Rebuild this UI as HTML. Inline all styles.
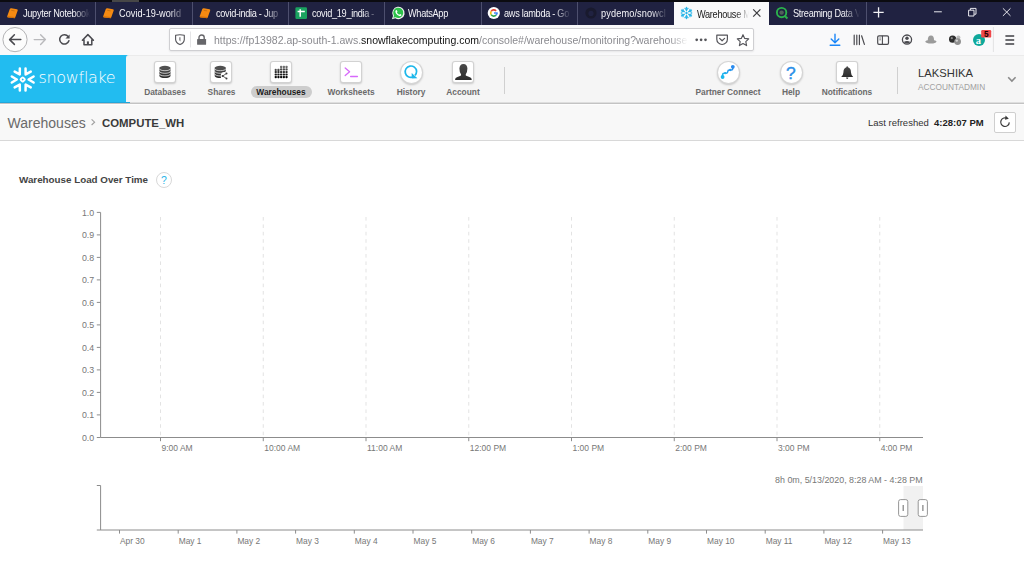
<!DOCTYPE html>
<html><head><meta charset="utf-8"><title>Warehouse Monitoring</title>
<style>
*{box-sizing:border-box;margin:0;padding:0}
html,body{width:1024px;height:576px;overflow:hidden;background:#fff;font-family:"Liberation Sans",sans-serif}
.a{position:absolute}
.t{position:absolute;white-space:nowrap;line-height:1}
/* firefox chrome */
#top{left:0;top:0;width:1024px;height:1.5px;background:#0b0b10}
#tabs{left:0;top:1px;width:1024px;height:24px;background:#202241}
.tab{position:absolute;top:0;height:24px;color:#f4f4f8;font-size:9.2px;letter-spacing:-.3px}
.tab .lbl{position:absolute;left:23px;top:7.1px;transform:scaleY(1.09);transform-origin:0 80%;white-space:nowrap;line-height:12px;width:67px;overflow:hidden;
  -webkit-mask-image:linear-gradient(90deg,#000 75%,transparent 100%);mask-image:linear-gradient(90deg,#000 75%,transparent 100%)}
.sep{position:absolute;top:0;width:1px;height:24px;background:#4d4f6e}
#tb{left:0;top:25px;width:1024px;height:30px;background:#f9f9fa}
#url{left:169px;top:28px;width:585px;height:23px;background:#fff;border:1px solid #cfcfd2;border-radius:2px;box-shadow:0 1px 2px rgba(0,0,0,.08)}
/* snowflake */
#hdr{left:126px;top:55px;width:898px;height:47px;background:#f5f5f5;border-top:1px solid #ebebeb;border-top-left-radius:3px}
#hdrb{left:0;top:102px;width:1024px;height:2px;background:linear-gradient(#dedede 0 50%,#c3c3c3 50% 100%)}
#logo{left:0;top:55px;width:130px;height:48px;background:linear-gradient(#22bcf0 0 47px,#22a6da 47px 48px)}
.ib{position:absolute;top:62px;width:20px;height:20px;margin-left:1px;background:#fff;border-radius:2px;box-shadow:0 0 0 1px #d2d2d2,0 1px 2px 1px rgba(0,0,0,.18)}
.ic{position:absolute;top:61.5px;width:21px;height:21px;margin-left:.5px;background:#fff;border-radius:11px;box-shadow:0 0 0 1px #d6d6d6,0 1px 2px 1px rgba(0,0,0,.18)}
.nl{position:absolute;top:88px;font-size:8.35px;font-weight:700;color:#6b6b6b;white-space:nowrap;line-height:9px;transform:translateX(-50%)}
#bc{left:0;top:104px;width:1024px;height:37px;background:#f8f8f8;border-top:1px solid #fdfdfd;border-bottom:1px solid #d8d8d8}
.ax{font-size:8.8px;fill:#777;font-family:"Liberation Sans",sans-serif}
</style></head><body>
<!-- ===== Firefox tab bar ===== -->
<div class="a" id="tabs">
  <div class="tab" style="left:0;width:95px"><span class="lbl">Jupyter Notebook</span></div>
  <div class="tab" style="left:96px;width:96px"><span class="lbl" style="letter-spacing:.02px">Covid-19-world</span></div>
  <div class="tab" style="left:193px;width:96px"><span class="lbl">covid-india - Jup</span></div>
  <div class="tab" style="left:289px;width:96px"><span class="lbl">covid_19_india -</span></div>
  <div class="tab" style="left:385px;width:96px"><span class="lbl">WhatsApp</span></div>
  <div class="tab" style="left:481px;width:96px"><span class="lbl">aws lambda - Go</span></div>
  <div class="tab" style="left:578px;width:96px"><span class="lbl" style="letter-spacing:.12px">pydemo/snowcl</span></div>
  <div class="tab" style="left:674px;width:95px;top:.5px;background:#f9f9fa;color:#1a1a1a"><span class="lbl" style="width:52px">Warehouse M</span></div>
  <div class="tab" style="left:770px;width:96px"><span class="lbl">Streaming Data V</span></div>
  <div class="sep" style="left:95px"></div><div class="sep" style="left:192px"></div><div class="sep" style="left:288px"></div>
  <div class="sep" style="left:384px"></div><div class="sep" style="left:481px"></div><div class="sep" style="left:577px"></div>
  <div class="sep" style="left:866px"></div>
</div>
<div class="a" id="top"></div><div class="a" style="left:112px;top:0;width:27px;height:1.5px;background:#474747"></div>
<!-- ===== Firefox toolbar ===== -->
<div class="a" id="tb"></div>
<div class="a" id="url"></div>
<div class="t" id="urltxt" style="left:214px;top:32.8px;font-size:10.5px;line-height:14px;color:#8a8a8f;width:474px;overflow:hidden;-webkit-mask-image:linear-gradient(90deg,#000 96%,transparent 100%);mask-image:linear-gradient(90deg,#000 96%,transparent 100%)">https://fp13982.ap-south-1.aws.<span style="color:#111">snowflakecomputing.com</span>/console#/warehouse/monitoring?warehouse</div>
<svg class="a" id="ffx" style="left:0;top:0" width="1024" height="56" viewBox="0 0 1024 56">
<defs>
<g id="book"><path d="M.2 8.3 2.8 1.1Q3.2 0 4.4 .2L10 1.2Q11 1.5 10.7 2.5L8.3 9.3Q7.9 10.3 6.8 10.1L1 9.5Q0 9.3 .2 8.3Z" fill="#f58a12"/><path d="M.6 8.7 7.6 9.6" stroke="#d2700a" stroke-width="1.1"/><path d="M4.2 2.3 7.6 2.9" stroke="#c9700f" stroke-width=".9"/></g>
</defs>
<use href="#book" x="7" y="8"/><use href="#book" x="103" y="8"/><use href="#book" x="199.5" y="8"/>
<!-- sheets -->
<rect x="295.4" y="7.2" width="11.6" height="11.7" rx="1.2" fill="#1aa260"/><path d="M297.6 11.4H304.8M300.2 9.2V16.8" stroke="#fff" stroke-width="1.5"/>
<!-- whatsapp -->
<path d="M391.9 19.2 393 15.9A6.2 6.2 0 1 1 395.3 18.3Z" fill="#f4f4f4"/>
<path d="M393.3 17.8 394 15.7A5.1 5.1 0 1 1 395.6 17.2Z" fill="#2dc24a"/>
<path d="M395.7 10.5Q396.6 9.6 397 10.6L397.5 11.7 396.9 12.5Q397.8 14.2 399.4 14.8L400.1 14 401.4 14.7Q401.7 15.6 400.5 16.1 399.2 16.4 397.4 15.1 395.6 13.5 395.4 12 395.3 11.1 395.7 10.5Z" fill="#fff"/>
<!-- google -->
<circle cx="493.8" cy="13" r="6.1" fill="#fff"/>
<path d="M491.17 11.36A3.1 3.1 0 0 1 496.10 10.93" fill="none" stroke="#ea4335" stroke-width="1.6"/>
<path d="M491.12 14.55A3.1 3.1 0 0 1 491.17 11.36" fill="none" stroke="#fbbc05" stroke-width="1.6"/>
<path d="M496.17 14.99A3.1 3.1 0 0 1 491.12 14.55" fill="none" stroke="#34a853" stroke-width="1.6"/>
<path d="M496.90 13.00A3.1 3.1 0 0 1 496.17 14.99" fill="none" stroke="#4285f4" stroke-width="1.6"/>
<path d="M494.0 13.0H497.70000000000005" stroke="#4285f4" stroke-width="1.5"/>
<!-- github (dark on dark) -->
<circle cx="591" cy="13" r="5.6" fill="#191a2e"/><circle cx="591" cy="13.4" r="2.6" fill="#202241"/>
<!-- snowflake favicon -->
<g stroke="#29b5e8" stroke-width="1.5" stroke-linecap="round" fill="none">
<path d="M686.5 7.4V10.4M686.5 15.6V18.6M681.6 10.2 684.2 11.7M688.8 14.3 691.4 15.8M681.6 15.8 684.2 14.3M688.8 11.7 691.4 10.2"/>
<path d="M684.9 8.3 686.5 9.7 688.1 8.3M684.9 17.7 686.5 16.3 688.1 17.7M681.3 12.2 683.3 11.3 683 9.2M691.7 13.8 689.7 14.7 690 16.8M681.3 13.8 683.3 14.7 683 16.8M691.7 12.2 689.7 11.3 690 9.2" stroke-width="1.1"/>
</g><rect x="685.4" y="11.9" width="2.2" height="2.2" fill="#29b5e8" transform="rotate(45 686.5 13)"/>
<!-- tab close -->
<path d="M753.2 9.4 760.4 16.6M760.4 9.4 753.2 16.6" stroke="#3a3a3e" stroke-width="1.2"/>
<!-- qlik -->
<circle cx="781.6" cy="12.6" r="4.7" fill="none" stroke="#2bb24c" stroke-width="1.9"/><circle cx="781.6" cy="12.6" r="2.2" fill="#51605a"/><path d="M784.6 15.8 787.4 18.4" stroke="#2bb24c" stroke-width="2"/>
<!-- plus / window controls -->
<path d="M873.4 12.4H883.7M878.55 7.2V17.6" stroke="#f2f2f5" stroke-width="1.3"/>
<path d="M934 11.8H941.8" stroke="#e8e8ee" stroke-width="1"/>
<path d="M968.6 10.2H974V16H968.6ZM970.4 10V8.4H976V14.2H974.2" fill="none" stroke="#e8e8ee" stroke-width="1"/>
<path d="M1002.9 8.3 1010.5 15.9M1010.5 8.3 1002.9 15.9" stroke="#e8e8ee" stroke-width="1"/>
<!-- nav buttons -->
<circle cx="15" cy="39.6" r="12.1" fill="#fcfcfc" stroke="#b4b4b6" stroke-width="1"/>
<path d="M20.8 39.6H9.6M14.4 34.8 9.6 39.6 14.4 44.4" fill="none" stroke="#4a4a4f" stroke-width="1.5" stroke-linecap="round" stroke-linejoin="round"/>
<path d="M34.2 39.6H45.4M40.6 34.8 45.4 39.6 40.6 44.4" fill="none" stroke="#b9b9bc" stroke-width="1.4" stroke-linecap="round" stroke-linejoin="round"/>
<path d="M68.2 36.6A4.7 4.7 0 1 0 68.9 40.8" fill="none" stroke="#4a4a4f" stroke-width="1.5" stroke-linecap="round"/><path d="M69.6 34.4V38.6H65.4Z" fill="#4a4a4f"/>
<path d="M82.4 40.2 87.9 34.6 93.4 40.2M84 39.4V44.8H91.8V39.4" fill="none" stroke="#4a4a4f" stroke-width="1.5" stroke-linejoin="round" stroke-linecap="round"/><rect x="86.9" y="41.4" width="2" height="3.4" fill="#4a4a4f"/>
<!-- url bar icons -->
<path d="M175.6 35.3Q180 34.2 184.3 35.3V39.6Q184 43 180 44.6 176 43 175.6 39.6Z" fill="none" stroke="#55555a" stroke-width="1.1" stroke-linejoin="round"/><path d="M179.4 37.2H180.4V41.4Q179.5 40.8 179.4 39.8Z" fill="#55555a"/>
<path d="M190.5 31.5V47.4" stroke="#e4e4e6" stroke-width="1"/>
<rect x="197.1" y="39" width="9" height="5.8" rx=".6" fill="#66666a"/><path d="M199 39.4V37.6A2.6 2.6 0 0 1 204.2 37.6V39.4" fill="none" stroke="#66666a" stroke-width="1.4"/>
<circle cx="696.7" cy="39.8" r="1.35" fill="#55555a"/><circle cx="701.1" cy="39.8" r="1.35" fill="#55555a"/><circle cx="705.5" cy="39.8" r="1.35" fill="#55555a"/>
<path d="M716.8 35.2H727.4V39.2A5.3 5.3 0 0 1 716.8 39.2Z" fill="none" stroke="#55555a" stroke-width="1.2" stroke-linejoin="round"/><path d="M719.6 38.4 722.1 40.8 724.6 38.4" fill="none" stroke="#55555a" stroke-width="1.2" stroke-linecap="round" stroke-linejoin="round"/>
<path d="M743 34.7 744.7 38.4 748.7 38.9 745.8 41.6 746.6 45.6 743 43.6 739.4 45.6 740.2 41.6 737.3 38.9 741.3 38.4Z" fill="none" stroke="#55555a" stroke-width="1.15" stroke-linejoin="round"/>
<!-- toolbar right icons -->
<path d="M835 34.2V42.6M831.2 39 835 42.8 838.8 39M830.2 45.2H839.8" fill="none" stroke="#1a86f7" stroke-width="1.4" stroke-linecap="round" stroke-linejoin="round"/>
<path d="M854.2 35.2V44.6M856.8 35.2V44.6M859.4 35.2V44.6M861.6 35.8 864.4 44.4" fill="none" stroke="#4a4a4f" stroke-width="1.2" stroke-linecap="round"/>
<rect x="877.7" y="35.8" width="10.8" height="8.6" rx="1.3" fill="none" stroke="#4a4a4f" stroke-width="1.2"/><path d="M882.4 35.8V44.4" stroke="#4a4a4f" stroke-width="1.1"/><path d="M879.4 38H880.8M879.4 39.8H880.8" stroke="#4a4a4f" stroke-width=".8"/>
<circle cx="907" cy="39.6" r="4.6" fill="none" stroke="#4a4a4f" stroke-width="1.3"/><circle cx="907" cy="38.2" r="1.7" fill="#4a4a4f"/><path d="M903.6 42Q907 39.8 910.4 42 907 45.2 903.6 42Z" fill="#4a4a4f"/>
<path d="M925.2 41.4Q926.4 40.2 927.8 40.2 927.6 35.6 931 35.5 934.2 35.6 934 40.2 935.4 40.2 936.6 41.4 935.6 43.4 931 43.6 926.2 43.4 925.2 41.4Z" fill="#9b9b9b"/>
<circle cx="952.6" cy="39.2" r="3.6" fill="#2e2e2e"/><circle cx="951.8" cy="38.2" r="1.1" fill="#8a8a8a"/><circle cx="958.4" cy="37.6" r="2" fill="#bdbdbd"/><circle cx="957.6" cy="41.6" r="3.4" fill="#8f8f8f"/><circle cx="956.8" cy="40.6" r="1.2" fill="#d6d6d6"/>
<circle cx="979" cy="40" r="6" fill="#0fa89b"/>
<rect x="981.2" y="30" width="10" height="7.6" rx="1.2" fill="#f0484b"/>
<path d="M993.4 27V52" stroke="#e2e2e4" stroke-width="1"/>
<path d="M1005.4 36H1014.2M1005.4 40H1014.2M1005.4 44H1014.2" stroke="#3f3f44" stroke-width="1.3"/>
<text x="975.7" y="43.6" font-family="Liberation Serif,serif" font-weight="700" font-size="10.5" fill="#fff">a</text>
<text x="983.9" y="36.8" font-family="Liberation Sans,sans-serif" font-weight="700" font-size="8.2" fill="#200">5</text>
</svg>
<!-- ===== Snowflake header ===== -->
<div class="a" id="hdrb"></div>
<div class="a" id="logo"></div>
<div class="a" id="hdr"></div>
<div class="t" style="left:38.5px;top:70.2px;font-family:'DejaVu Sans Light','DejaVu Sans','Liberation Sans',sans-serif;font-weight:200;font-size:16px;color:#fff;letter-spacing:-.32px">snowflake</div>
<div class="ib" style="left:154px"></div><div class="nl" style="left:165px">Databases</div>
<div class="ib" style="left:210px"></div><div class="nl" style="left:221.5px">Shares</div>
<div class="a" style="left:251px;top:86px;width:61px;height:12px;border-radius:6px;background:#cdcdcd"></div>
<div class="ib" style="left:270px"></div><div class="nl" style="left:281px;color:#1d1d1d">Warehouses</div>
<div class="ib" style="left:340px"></div><div class="nl" style="left:351px">Worksheets</div>
<div class="ic" style="left:400px"></div><div class="nl" style="left:411px">History</div>
<div class="ib" style="left:452px"></div><div class="nl" style="left:463px">Account</div>
<div class="a" style="left:504px;top:67px;width:1px;height:27px;background:#d0d0d0"></div>
<div class="ic" style="left:717px"></div><div class="nl" style="left:728px">Partner Connect</div>
<div class="ic" style="left:780px"></div><div class="nl" style="left:791px">Help</div>
<div class="ib" style="left:836px"></div><div class="nl" style="left:847px">Notifications</div>
<div class="a" style="left:897px;top:67px;width:1px;height:27px;background:#d0d0d0"></div>
<div class="t" style="left:918px;top:68px;font-size:11.2px;color:#333;letter-spacing:.05px">LAKSHIKA</div>
<div class="t" style="left:918px;top:83px;font-size:8.3px;color:#a0a0a0">ACCOUNTADMIN</div>
<!-- ===== Breadcrumb bar ===== -->
<div class="a" id="bc"></div>
<div class="t" style="left:7.6px;top:116.2px;font-size:14px;color:#6a6a6a">Warehouses</div>
<div class="t" style="left:102px;top:118.2px;font-size:11.4px;font-weight:700;color:#3a3a3a">COMPUTE_WH</div>
<div class="t" style="left:868px;top:118px;font-size:9.5px;color:#333">Last refreshed</div>
<div class="t" style="left:934px;top:118px;font-size:9.5px;font-weight:700;color:#222">4:28:07 PM</div>
<div class="a" style="left:994px;top:112px;width:22px;height:21px;background:#fff;border:1px solid #cfcfcf;border-radius:2px"></div>
<svg class="a" id="sfx" style="left:0;top:55px" width="1024" height="90" viewBox="0 55 1024 90">
<defs>
<linearGradient id="gd" x1="0" y1="0" x2="0" y2="1"><stop offset="0" stop-color="#4a4a4a"/><stop offset="1" stop-color="#2c2c2c"/></linearGradient>
<linearGradient id="gw" gradientUnits="userSpaceOnUse" x1="0" y1="65.8" x2="0" y2="78.3"><stop offset="0" stop-color="#7a7a7a"/><stop offset=".5" stop-color="#2a2a2a"/><stop offset="1" stop-color="#000"/></linearGradient>
<linearGradient id="gp" x1="0" y1="1" x2="1" y2="0"><stop offset="0" stop-color="#1cb8ec"/><stop offset="1" stop-color="#2a86ee"/></linearGradient>
<g id="db"><path d="M0 2V10.2A5.55 2 0 0 0 11.1 10.2V2Z" fill="url(#gd)"/><ellipse cx="5.55" cy="2" rx="5.55" ry="2" fill="#505050"/>
<path d="M0 2.9A5.55 2 0 0 0 11.1 2.9M0 5.5A5.55 2 0 0 0 11.1 5.5M0 8.1A5.55 2 0 0 0 11.1 8.1" fill="none" stroke="#f2f2f2" stroke-width=".75"/></g>
</defs>
<g fill="none" stroke="#fff" stroke-width="2.5" stroke-linecap="round" stroke-linejoin="round"><path transform="rotate(0 22.7 79.5)" d="M33.6 76.5 28.6 79.5 33.6 82.5"/><path transform="rotate(60 22.7 79.5)" d="M33.6 76.5 28.6 79.5 33.6 82.5"/><path transform="rotate(120 22.7 79.5)" d="M33.6 76.5 28.6 79.5 33.6 82.5"/><path transform="rotate(180 22.7 79.5)" d="M33.6 76.5 28.6 79.5 33.6 82.5"/><path transform="rotate(240 22.7 79.5)" d="M33.6 76.5 28.6 79.5 33.6 82.5"/><path transform="rotate(300 22.7 79.5)" d="M33.6 76.5 28.6 79.5 33.6 82.5"/></g>
<rect x="21.0" y="77.8" width="3.4" height="3.4" rx=".7" fill="none" stroke="#fff" stroke-width="1.8" transform="rotate(45 22.7 79.5)"/>
<use href="#db" x="159.4" y="65.8"/>
<use href="#db" x="214.7" y="65.8"/>
<circle cx="224.6" cy="76" r="3.9" fill="#fff"/>
<path d="M226.4 73.6 222.6 76 226.4 78.4" fill="none" stroke="#3c3c3c" stroke-width=".8"/><circle cx="226.5" cy="73.6" r="1" fill="#3c3c3c"/><circle cx="222.6" cy="76" r="1" fill="#3c3c3c"/><circle cx="226.5" cy="78.4" r="1" fill="#3c3c3c"/>
<g fill="url(#gw)"><rect x="274.60" y="76.00" width="2.3" height="2.15" rx=".8"/><rect x="274.60" y="73.45" width="2.3" height="2.15" rx=".8"/><rect x="274.60" y="70.90" width="2.3" height="2.15" rx=".8"/><circle cx="275.70" cy="69.95" r="1.1"/><rect x="277.30" y="76.00" width="2.3" height="2.15" rx=".8"/><rect x="277.30" y="73.45" width="2.3" height="2.15" rx=".8"/><rect x="277.30" y="70.90" width="2.3" height="2.15" rx=".8"/><rect x="277.30" y="68.85" width="2.3" height="2.15" rx=".8"/><rect x="280.00" y="76.00" width="2.3" height="2.15" rx=".8"/><rect x="280.00" y="73.45" width="2.3" height="2.15" rx=".8"/><rect x="280.00" y="70.90" width="2.3" height="2.15" rx=".8"/><rect x="280.00" y="68.35" width="2.3" height="2.15" rx=".8"/><rect x="280.00" y="65.80" width="2.3" height="2.15" rx=".8"/><rect x="282.70" y="76.00" width="2.3" height="2.15" rx=".8"/><rect x="282.70" y="73.45" width="2.3" height="2.15" rx=".8"/><rect x="282.70" y="70.90" width="2.3" height="2.15" rx=".8"/><rect x="282.70" y="68.35" width="2.3" height="2.15" rx=".8"/><rect x="282.70" y="65.80" width="2.3" height="2.15" rx=".8"/><rect x="285.40" y="76.00" width="2.3" height="2.15" rx=".8"/><rect x="285.40" y="73.45" width="2.3" height="2.15" rx=".8"/><rect x="285.40" y="70.90" width="2.3" height="2.15" rx=".8"/><rect x="285.40" y="68.35" width="2.3" height="2.15" rx=".8"/><rect x="285.40" y="65.80" width="2.3" height="2.15" rx=".8"/></g>
<path d="M345.2 68 349.6 71.8 345.2 75.6" fill="none" stroke="#d769fb" stroke-width="1.3" stroke-linecap="round" stroke-linejoin="round"/><path d="M350.6 76.5H357.4" stroke="#d769fb" stroke-width="1.3" stroke-linecap="round"/>
<path d="M412.85 77.06A5.7 5.7 0 1 1 416.58 71.2Q416.6 73.6 415 75.4" fill="none" stroke="#1db7ea" stroke-width="1.7"/><path d="M411.7 72.9 417.4 78.3 411.7 78.5Z" fill="#1db7ea"/>
<path d="M455 79.9Q455 77.6 457.4 76.9L460.6 75.8Q461.4 75.2 461 74.2 459.4 72 459.4 68.6 459.6 64.2 463.4 64 467.3 64.2 467.4 68.6 467.4 72 465.8 74.2 465.4 75.2 466.2 75.8L469.4 76.9Q471.8 77.6 471.8 79.9Z" fill="url(#gd)"/>
<path d="M722.6 77.2V74.8Q722.6 73.2 724.2 73.2H726.2Q727.8 73.2 727.8 71.6 727.8 70 729.4 70H731.2Q732.8 70 732.8 68.4V66.8" fill="none" stroke="url(#gp)" stroke-width="1.5"/><circle cx="722.6" cy="77" r="1.9" fill="#1cb8ec"/><circle cx="732.8" cy="66.8" r="1.9" fill="#2a8bee"/><circle cx="725.2" cy="73.2" r="1.15" fill="#1fb0ec"/><circle cx="730.2" cy="70" r="1.15" fill="#259cee"/>
<text x="790.9" y="78.6" text-anchor="middle" font-family="Liberation Sans,sans-serif" font-size="17.4" fill="#2b8fe8" stroke="#2b8fe8" stroke-width=".45">?</text>
<path d="M841.2 77Q843.2 75.6 843.4 72.4 843.4 68 846.4 67.2 846.4 66.2 847.2 66.2 848 66.2 848 67.2 851 68 851 72.4 851.2 75.6 853.2 77Z" fill="url(#gd)"/><path d="M846 77.6H848.4Q848.2 79 847.2 79 846.2 79 846 77.6Z" fill="#333"/>
<path d="M1008.2 77.2 1011.9 81 1015.6 77.2" fill="none" stroke="#8a8a8a" stroke-width="1.6"/>
<path d="M91.6 119.4 94.6 122.2 91.6 125" fill="none" stroke="#a0a0a0" stroke-width="1.1"/>
<path d="M1007.4 118.6A4.3 4.3 0 1 0 1009.3 122.4" fill="none" stroke="#3a3a3a" stroke-width="1.2"/><path d="M1005.6 115.6 1008.8 118.8 1005 119.8Z" fill="#3a3a3a"/>
</svg>
<!-- ===== Content ===== -->
<div class="t" style="left:19px;top:175px;font-size:9.8px;font-weight:700;color:#444">Warehouse Load Over Time</div>
<div class="a" style="left:156px;top:172px;width:16px;height:16px;border-radius:8px;border:1px solid #d8d8d8;background:#fff"></div>
<div class="t" style="left:161px;top:175px;font-size:10.5px;color:#29b5e8">?</div>
<svg class="a" id="chart" style="left:0;top:200px" width="1024" height="376" viewBox="0 200 1024 376">
<line x1="160.50" y1="217" x2="160.50" y2="437" stroke="#dcdcdc" stroke-width="0.8" stroke-dasharray="3.6 3.8"/>
<line x1="263.25" y1="217" x2="263.25" y2="437" stroke="#dcdcdc" stroke-width="0.8" stroke-dasharray="3.6 3.8"/>
<line x1="366.00" y1="217" x2="366.00" y2="437" stroke="#dcdcdc" stroke-width="0.8" stroke-dasharray="3.6 3.8"/>
<line x1="468.75" y1="217" x2="468.75" y2="437" stroke="#dcdcdc" stroke-width="0.8" stroke-dasharray="3.6 3.8"/>
<line x1="571.50" y1="217" x2="571.50" y2="437" stroke="#dcdcdc" stroke-width="0.8" stroke-dasharray="3.6 3.8"/>
<line x1="674.25" y1="217" x2="674.25" y2="437" stroke="#dcdcdc" stroke-width="0.8" stroke-dasharray="3.6 3.8"/>
<line x1="777.00" y1="217" x2="777.00" y2="437" stroke="#dcdcdc" stroke-width="0.8" stroke-dasharray="3.6 3.8"/>
<line x1="879.75" y1="217" x2="879.75" y2="437" stroke="#dcdcdc" stroke-width="0.8" stroke-dasharray="3.6 3.8"/>
<path d="M96.8 212.4H100.6V437.5H923" fill="none" stroke="#8c8c8c" stroke-width="1"/>
<text class="ax" x="94.2" y="215.80" text-anchor="end">1.0</text>
<line x1="96.8" y1="234.90" x2="100.6" y2="234.90" stroke="#8c8c8c" stroke-width="1"/>
<text class="ax" x="94.2" y="238.30" text-anchor="end">0.9</text>
<line x1="96.8" y1="257.40" x2="100.6" y2="257.40" stroke="#8c8c8c" stroke-width="1"/>
<text class="ax" x="94.2" y="260.80" text-anchor="end">0.8</text>
<line x1="96.8" y1="279.90" x2="100.6" y2="279.90" stroke="#8c8c8c" stroke-width="1"/>
<text class="ax" x="94.2" y="283.30" text-anchor="end">0.7</text>
<line x1="96.8" y1="302.40" x2="100.6" y2="302.40" stroke="#8c8c8c" stroke-width="1"/>
<text class="ax" x="94.2" y="305.80" text-anchor="end">0.6</text>
<line x1="96.8" y1="324.90" x2="100.6" y2="324.90" stroke="#8c8c8c" stroke-width="1"/>
<text class="ax" x="94.2" y="328.30" text-anchor="end">0.5</text>
<line x1="96.8" y1="347.40" x2="100.6" y2="347.40" stroke="#8c8c8c" stroke-width="1"/>
<text class="ax" x="94.2" y="350.80" text-anchor="end">0.4</text>
<line x1="96.8" y1="369.90" x2="100.6" y2="369.90" stroke="#8c8c8c" stroke-width="1"/>
<text class="ax" x="94.2" y="373.30" text-anchor="end">0.3</text>
<line x1="96.8" y1="392.40" x2="100.6" y2="392.40" stroke="#8c8c8c" stroke-width="1"/>
<text class="ax" x="94.2" y="395.80" text-anchor="end">0.2</text>
<line x1="96.8" y1="414.90" x2="100.6" y2="414.90" stroke="#8c8c8c" stroke-width="1"/>
<text class="ax" x="94.2" y="418.30" text-anchor="end">0.1</text>
<line x1="96.8" y1="437.5" x2="100.6" y2="437.5" stroke="#8c8c8c" stroke-width="1"/>
<text class="ax" x="94.2" y="440.80" text-anchor="end">0.0</text>
<line x1="160.50" y1="437.5" x2="160.50" y2="441.2" stroke="#8c8c8c" stroke-width="1"/>
<text class="ax" style="font-size:8.5px" x="161.50" y="450.6">9:00 AM</text>
<line x1="263.25" y1="437.5" x2="263.25" y2="441.2" stroke="#8c8c8c" stroke-width="1"/>
<text class="ax" style="font-size:8.5px" x="264.25" y="450.6">10:00 AM</text>
<line x1="366.00" y1="437.5" x2="366.00" y2="441.2" stroke="#8c8c8c" stroke-width="1"/>
<text class="ax" style="font-size:8.5px" x="367.00" y="450.6">11:00 AM</text>
<line x1="468.75" y1="437.5" x2="468.75" y2="441.2" stroke="#8c8c8c" stroke-width="1"/>
<text class="ax" style="font-size:8.5px" x="469.75" y="450.6">12:00 PM</text>
<line x1="571.50" y1="437.5" x2="571.50" y2="441.2" stroke="#8c8c8c" stroke-width="1"/>
<text class="ax" style="font-size:8.5px" x="572.50" y="450.6">1:00 PM</text>
<line x1="674.25" y1="437.5" x2="674.25" y2="441.2" stroke="#8c8c8c" stroke-width="1"/>
<text class="ax" style="font-size:8.5px" x="675.25" y="450.6">2:00 PM</text>
<line x1="777.00" y1="437.5" x2="777.00" y2="441.2" stroke="#8c8c8c" stroke-width="1"/>
<text class="ax" style="font-size:8.5px" x="778.00" y="450.6">3:00 PM</text>
<line x1="879.75" y1="437.5" x2="879.75" y2="441.2" stroke="#8c8c8c" stroke-width="1"/>
<text class="ax" style="font-size:8.5px" x="880.75" y="450.6">4:00 PM</text>
<text class="ax" style="font-size:8.9px" x="922.6" y="482.6" text-anchor="end">8h 0m, 5/13/2020, 8:28 AM - 4:28 PM</text>
<rect x="903.5" y="486" width="19.5" height="44" fill="#f1f1f1"/>
<path d="M96.8 485.5H100.6V530M96.8 530H923" fill="none" stroke="#8c8c8c" stroke-width="1"/>
<line x1="119.50" y1="530" x2="119.50" y2="533.6" stroke="#8c8c8c" stroke-width="1"/>
<text class="ax" style="font-size:8.4px" x="120.00" y="543.8">Apr 30</text>
<line x1="178.20" y1="530" x2="178.20" y2="533.6" stroke="#8c8c8c" stroke-width="1"/>
<text class="ax" style="font-size:8.4px" x="178.70" y="543.8">May 1</text>
<line x1="236.90" y1="530" x2="236.90" y2="533.6" stroke="#8c8c8c" stroke-width="1"/>
<text class="ax" style="font-size:8.4px" x="237.40" y="543.8">May 2</text>
<line x1="295.60" y1="530" x2="295.60" y2="533.6" stroke="#8c8c8c" stroke-width="1"/>
<text class="ax" style="font-size:8.4px" x="296.10" y="543.8">May 3</text>
<line x1="354.30" y1="530" x2="354.30" y2="533.6" stroke="#8c8c8c" stroke-width="1"/>
<text class="ax" style="font-size:8.4px" x="354.80" y="543.8">May 4</text>
<line x1="413.00" y1="530" x2="413.00" y2="533.6" stroke="#8c8c8c" stroke-width="1"/>
<text class="ax" style="font-size:8.4px" x="413.50" y="543.8">May 5</text>
<line x1="471.70" y1="530" x2="471.70" y2="533.6" stroke="#8c8c8c" stroke-width="1"/>
<text class="ax" style="font-size:8.4px" x="472.20" y="543.8">May 6</text>
<line x1="530.40" y1="530" x2="530.40" y2="533.6" stroke="#8c8c8c" stroke-width="1"/>
<text class="ax" style="font-size:8.4px" x="530.90" y="543.8">May 7</text>
<line x1="589.10" y1="530" x2="589.10" y2="533.6" stroke="#8c8c8c" stroke-width="1"/>
<text class="ax" style="font-size:8.4px" x="589.60" y="543.8">May 8</text>
<line x1="647.80" y1="530" x2="647.80" y2="533.6" stroke="#8c8c8c" stroke-width="1"/>
<text class="ax" style="font-size:8.4px" x="648.30" y="543.8">May 9</text>
<line x1="706.50" y1="530" x2="706.50" y2="533.6" stroke="#8c8c8c" stroke-width="1"/>
<text class="ax" style="font-size:8.4px" x="707.00" y="543.8">May 10</text>
<line x1="765.20" y1="530" x2="765.20" y2="533.6" stroke="#8c8c8c" stroke-width="1"/>
<text class="ax" style="font-size:8.4px" x="765.70" y="543.8">May 11</text>
<line x1="823.90" y1="530" x2="823.90" y2="533.6" stroke="#8c8c8c" stroke-width="1"/>
<text class="ax" style="font-size:8.4px" x="824.40" y="543.8">May 12</text>
<line x1="882.60" y1="530" x2="882.60" y2="533.6" stroke="#8c8c8c" stroke-width="1"/>
<text class="ax" style="font-size:8.4px" x="883.10" y="543.8">May 13</text>
<rect x="898.6" y="499.6" width="9.2" height="16.8" rx="2" fill="#fff" stroke="#8a8a8a" stroke-width="0.9"/>
<rect x="902.5" y="505" width="1.5" height="6" fill="#999"/>
<rect x="918.2" y="499.6" width="9.2" height="16.8" rx="2" fill="#fff" stroke="#8a8a8a" stroke-width="0.9"/>
<rect x="922.1" y="505" width="1.5" height="6" fill="#999"/>
</svg>
</body></html>
